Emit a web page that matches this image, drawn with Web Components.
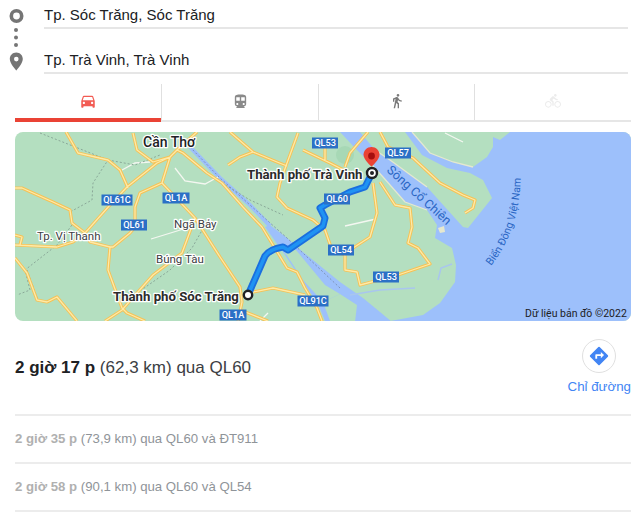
<!DOCTYPE html>
<html lang="vi">
<head>
<meta charset="utf-8">
<title>Chỉ đường</title>
<style>
  html, body { margin: 0; background: #fff; }
  body { width: 640px; height: 523px; overflow: hidden; font-family: "Liberation Sans", Arial, sans-serif; }
  directions-card { width: 616px; margin-left: 15px; }
</style>
</head>
<body>
<directions-card>
  <waypoint-list>
    <waypoint-field>Tp. Sóc Trăng, Sóc Trăng</waypoint-field>
    <waypoint-field>Tp. Trà Vinh, Trà Vinh</waypoint-field>
  </waypoint-list>
  <mode-tabs></mode-tabs>
  <route-map></route-map>
  <route-summary time="2 giờ 17 p">(62,3 km) qua QL60</route-summary>
  <alt-route time="2 giờ 35 p">(73,9 km) qua QL60 và ĐT911</alt-route>
  <alt-route time="2 giờ 58 p">(90,1 km) qua QL60 và QL54</alt-route>
</directions-card>

<script>
/**
 * Outer column of the card.
 */
customElements.define('directions-card',
  class extends HTMLElement {
    constructor () {
      super()
      this.attachShadow({ mode: 'open' }).innerHTML = `
        <style>
          :host { display: flex; flex-direction: column; }
        </style>
        <slot></slot>
      `
    }
  }
)

/**
 * From and to fields with the dotted marker column.
 */
customElements.define('waypoint-list',
  class extends HTMLElement {
    constructor () {
      super()
      this.attachShadow({ mode: 'open' }).innerHTML = `
        <style>
          :host { display: flex; height: 84px; margin-left: -15px; }
          svg { flex: none; width: 44px; height: 74px; }
          .fields { flex: none; width: 584px; display: flex; flex-direction: column; gap: 16px; }
        </style>
        <svg viewBox="0 0 44 74">
          <circle cx="16.500" cy="16" r="5.200" fill="none" stroke="#757575" stroke-width="3.600"/>
          <circle cx="16" cy="30" r="2" fill="#757575"/>
          <circle cx="16" cy="37.500" r="2" fill="#757575"/>
          <circle cx="16" cy="45" r="2" fill="#757575"/>
          <path fill="#757575" fill-rule="evenodd" d="M16.300 52.500c-3.700 0-6.500 2.900-6.500 6.500 0 4.700 6.500 11.500 6.500 11.500s6.500-6.800 6.500-11.500c0-3.600-2.800-6.500-6.500-6.500zm0 4.300a2.300 2.300 0 1 1 0 4.600 2.300 2.300 0 0 1 0-4.600z"/>
        </svg>
        <div class="fields"><slot></slot></div>
      `
    }
  }
)

customElements.define('waypoint-field',
  class extends HTMLElement {
    constructor () {
      super()
      this.attachShadow({ mode: 'open' }).innerHTML = `
        <style>
          :host {
            display: flex;
            align-items: center;
            height: 29px;
            padding-top: 2px;
            border-bottom: 2px solid #e6e6e6;
            box-sizing: border-box;
            font-size: 15px;
            color: #202124;
          }
        </style>
        <slot></slot>
      `
    }
  }
)

/**
 * Travel mode tabs. The car is the selected one.
 */
const MODE_ICONS = {
  car: 'M18.920 6.010C18.720 5.420 18.160 5 17.500 5h-11c-.66 0-1.210.42-1.420 1.010L3 12v8c0 .55.45 1 1 1h1c.55 0 1-.45 1-1v-1h12v1c0 .55.45 1 1 1h1c.55 0 1-.45 1-1v-8l-2.080-5.990zM6.500 16c-.83 0-1.500-.67-1.500-1.500S5.670 13 6.500 13s1.500.67 1.500 1.500S7.330 16 6.500 16zm11 0c-.83 0-1.500-.67-1.500-1.500s.67-1.500 1.500-1.500 1.500.67 1.500 1.500-.67 1.500-1.500 1.500zM5 11l1.500-4.500h11L19 11H5z',
  train: 'M12 2c-4.420 0-8 .5-8 4v9.500C4 17.430 5.570 19 7.500 19L6 20.500v.5h12v-.5L16.500 19c1.930 0 3.500-1.570 3.500-3.500V6c0-3.500-3.580-4-8-4zM7.500 17c-.83 0-1.500-.67-1.500-1.500S6.670 14 7.500 14s1.500.67 1.500 1.500S8.330 17 7.500 17zm3.500-6H6V6h5v5zm5.500 6c-.83 0-1.500-.67-1.500-1.500s.67-1.500 1.500-1.500 1.500.67 1.500 1.500-.67 1.500-1.500 1.500zm1.500-6h-5V6h5v5z',
  walk: 'M13.500 5.500c1.100 0 2-.9 2-2s-.9-2-2-2-2 .9-2 2 .9 2 2 2zM9.800 8.900L7 23h2.100l1.800-8 2.100 2v6h2v-7.500l-2.100-2 .6-3C14.800 12 16.800 13 19 13v-2c-1.900 0-3.500-1-4.300-2.400l-1-1.600c-.4-.6-1-1-1.700-1-.3 0-.5.1-.8.1L6 8.300V13h2V9.600l1.800-.7',
  bike: 'M15.500 5.500c1.100 0 2-.9 2-2s-.9-2-2-2-2 .9-2 2 .9 2 2 2zM5 12c-2.800 0-5 2.200-5 5s2.200 5 5 5 5-2.200 5-5-2.200-5-5-5zm0 8.500c-1.900 0-3.500-1.600-3.500-3.500s1.600-3.500 3.500-3.500 3.500 1.600 3.500 3.500-1.600 3.500-3.500 3.500zm5.800-10l2.400-2.400.8.8c1.300 1.300 3 2.100 5.100 2.100V9c-1.500 0-2.700-.6-3.600-1.500l-1.900-1.900c-.5-.4-1-.6-1.600-.6s-1.100.2-1.400.6L7.800 8.400c-.4.4-.6.9-.6 1.400 0 .6.2 1.100.6 1.400L11 14v5h2v-6.200l-2.200-2.300zM19 12c-2.800 0-5 2.200-5 5s2.200 5 5 5 5-2.200 5-5-2.200-5-5-5zm0 8.500c-1.900 0-3.500-1.600-3.500-3.500s1.600-3.500 3.500-3.500 3.500 1.600 3.500 3.500-1.600 3.500-3.500 3.500z'
}

customElements.define('mode-tabs',
  class extends HTMLElement {
    constructor () {
      super()
      const tab = (name, color, size, cls) => `
        <div class="tab ${cls}">
          <svg viewBox="0 0 24 24" width="${size}" height="${size}"><path fill="${color}" d="${MODE_ICONS[name]}"/></svg>
        </div>`
      this.attachShadow({ mode: 'open' }).innerHTML = `
        <style>
          :host {
            display: grid;
            grid-template-columns: 146px 157px 156px 1fr;
            height: 38px;
            border-bottom: 2px solid #e6e6e6;
            box-sizing: border-box;
          }
          .tab { display: flex; align-items: center; justify-content: center; border-left: 1px solid #e0e0e0; padding-bottom: 2px; }
          .tab.first { border-left: 0; position: relative; }
          .tab.first::after {
            content: "";
            position: absolute;
            left: 0; right: 0; bottom: -2px;
            height: 4px;
            background: #ea4335;
          }
        </style>
        ${tab('car', '#f25c54', 18, 'first')}
        ${tab('train', '#8a8a8a', 17, '')}
        ${tab('walk', '#7a7a7a', 16, '')}
        ${tab('bike', '#ececec', 16, '')}
      `
    }
  }
)

/**
 * The static map. Coordinates are page pixels, hence the offset viewBox.
 */
const ROADS = [
  'M66 132L78 153L108 160L120 170L128 188',
  'M15 188L22 188L53 202L70 210L72 223L85 233L110 205L127 187L157 163L170 157L177 150L197 132',
  'M170 157L162 183L180 202L195 218L182 253L153 275L137 293L122 310L105 321',
  'M162 183L140 193L135 207L135 227L130 233L113 247L110 247L90 242L85 233L73 242L57 247L15 245',
  'M110 247L108 270L122 308L127 313L145 321',
  'M15 235L22 237L20 245',
  'M15 258L27 273L37 300L47 302L57 297L77 321',
  'M195 218L220 257L240 287L242 302L238 321',
  'M240 310L268 321',
  'M253 292L273 288L305 295',
  'M133 133L137 150L153 162L170 157',
  'M177 150L183 153L207 173L222 183L243 207L262 227L287 268L297 272L305 288L317 308L322 321',
  'M230 132L253 152L277 162L287 166',
  'M228 165L240 157L253 152',
  'M298 133L287 163L280 183L277 197L287 208L313 220L325 230L332 250L345 255',
  'M332 248L353 248L370 237L377 213L373 183',
  'M380 182L395 205L410 208L412 227L408 243L418 248L430 264L398 275L360 285L357 272L345 270L345 255',
  'M303 150L330 163L357 177',
  'M325 143L325 160',
  'M368 132L350 153L345 167',
  'M380 132L388 147L413 158L440 183L463 195L475 200L473 208L465 213'
].join('')

const MINOR_ROADS = 'M122 170L135 163L150 162M175 168L185 181L205 184L218 177M151 239L190 227M345 226L376 219M445 133L463 142M260 321L268 313'
const BORDERS = 'M40 133L108 160L93 183L92 200L70 212L72 225L57 245L25 270L30 290L17 295M27 270L38 300M108 160L135 165L160 155M137 293L170 270L192 248L205 225M222 183L250 200L283 215'
const BANKS = 'M412 132L430 153L453 162L473 167M372 165L383 177L405 202L427 210M375 150L390 160L427 187'
const HAU_RIVER = 'M190 147L220 178L250 205L270 226'

const SHIELDS = [
  ['QL61C', 117, 200, 31], ['QL1A', 176, 198, 27], ['QL61', 134, 225, 26],
  ['QL60', 337, 199, 26], ['QL53', 325, 143, 26], ['QL57', 398, 153, 26],
  ['QL54', 341, 250, 26], ['QL53', 386, 277, 26], ['QL91C', 313, 301, 31],
  ['QL1A', 233, 315, 27]
]

const ROUTE = 'M248 295L265 256Q270 249 283 247L288 250L323 226L325 218L320 208L325 205L350 192L365 187L372 173'

customElements.define('route-map',
  class extends HTMLElement {
    constructor () {
      super()
      const shields = SHIELDS.map(([name, x, y, w]) => `
        <rect x="${x - w / 2}" y="${y - 5.500}" width="${w}" height="11" fill="#2b70c6"/>
        <text class="shield" x="${x}" y="${y + 3.200}">${name}</text>`).join('')
      this.attachShadow({ mode: 'open' }).innerHTML = `
        <style>
          :host { display: block; height: 189px; margin-top: 10px; border-radius: 8px; overflow: hidden; }
          svg { display: block; font-family: Roboto, "Liberation Sans", sans-serif; }
          .shield { font: 500 9.200px Roboto, "Liberation Sans", sans-serif; fill: #fff; text-anchor: middle; }
          .place { fill: #3c4043; stroke: #fff; stroke-width: 2.500px; paint-order: stroke; stroke-linejoin: round; font-size: 11.500px; }
          .city { font-weight: 700; font-size: 13.200px; fill: #2b2b2b; }
          .big { font-size: 14px; font-weight: 500; fill: #202124; }
          .water-label { fill: #2a66c4; font-size: 10.600px; }
          .water-label.river { font-size: 12.500px; }
        </style>
        <svg width="616" height="189" viewBox="15 132 616 189">
          <defs>
            <path id="curve" d="M491 266C508 244 521 215 521 170"/>
          </defs>
          <rect x="15" y="132" width="616" height="189" fill="#b4dfc0"/>
          <ellipse cx="345" cy="155" rx="9" ry="9" fill="#a7d8b5"/>
          <!-- sea and the two river mouths -->
          <path fill="#9dc0fb" d="M510 132L632 132L632 322L385 322L423 315L440 303L455 282L456 265L452 248L435 238L437 225L427 210L405 202L383 177L372 165L355 148L340 132L360 132L375 150L390 160L427 187L463 227L468 228L492 198L483 180L470 173L447 168L422 155L405 132L412 132L430 153L453 162L473 167L487 157L493 147L493 137L500 140Z"/>
          <path fill="#9dc0fb" d="M270 225L287 238L303 252L340 282L363 298L380 312L392 322L355 322L357 305L340 294L323 302L330 321L325 321L318 304L303 282L285 255L265 227Z"/>
          <path fill="#b4dfc0" d="M282 248L296 250L325 285L340 294L323 302L303 280Z"/>
          <path d="${HAU_RIVER}" fill="none" stroke="#9dc0fb" stroke-width="4"/>
          <path d="M190 147L220 178L250 205L287 238L340 288" fill="none" stroke="#7f94b8" stroke-width="1" stroke-dasharray="2 2"/>
          <path d="${BANKS}" fill="none" stroke="#e4e8cf" stroke-width="1.300"/>
          <path fill="#e6e8cf" d="M438 228L444 226L445 232L440 233Z"/>
          <path fill="none" stroke="#a9c6ee" stroke-width="1.500" d="M350 295L380 290L415 288M438 280L441 268L452 264"/>
          <path d="${MINOR_ROADS}" fill="none" stroke="#f4f7f1" stroke-width="1.300"/>
          <path d="${BORDERS}" fill="none" stroke="#8aa898" stroke-width="1" stroke-dasharray="2 2"/>
          <path d="${ROADS}" fill="none" stroke="#f6c255" stroke-width="3.200" stroke-linejoin="round"/>
          <path d="${ROADS}" fill="none" stroke="#fdeaa8" stroke-width="1.300" stroke-linejoin="round"/>
          <!-- route -->
          <path d="${ROUTE}" fill="none" stroke="#1a6fdf" stroke-width="7" stroke-linejoin="round"/>
          <path d="${ROUTE}" fill="none" stroke="#1f93f3" stroke-width="3.400" stroke-linejoin="round"/>
          ${shields}
          <text class="place big" x="143" y="147">Cần Thơ</text>
          <text class="place" x="37" y="240">Tp. Vị Thanh</text>
          <text class="place" x="174" y="228">Ngã Bảy</text>
          <text class="place" x="156" y="263">Búng Tàu</text>
          <text class="place city" x="113" y="300.500">Thành phố Sóc Trăng</text>
          <text class="place city" x="247" y="178.500">Thành phố Trà Vinh</text>
          <text class="water-label river" transform="translate(386 171) rotate(42)">Sông Cổ Chiên</text>
          <text class="water-label"><textPath href="#curve">Biển Đông Việt Nam</textPath></text>
          <text x="525" y="317" font-size="10.500" fill="#202124">Dữ liệu bản đồ ©2022</text>
          <circle cx="248" cy="295" r="4.200" fill="#fff" stroke="#202124" stroke-width="2.400"/>
          <path fill="#ea4335" d="M371.500 147c-4.500 0-8 3.500-8 7.800 0 5 8 11.800 8 11.800s8-6.800 8-11.800c0-4.300-3.500-7.800-8-7.800z"/>
          <circle cx="371.500" cy="156" r="3.400" fill="#a50e0e"/>
          <circle cx="372" cy="173" r="5" fill="#fff" stroke="#202124" stroke-width="2.400"/>
          <circle cx="372" cy="173" r="2" fill="#202124"/>
        </svg>
      `
    }
  }
)

/**
 * Fastest route with the directions button.
 */
customElements.define('route-summary',
  class extends HTMLElement {
    constructor () {
      super()
      this.attachShadow({ mode: 'open' }).innerHTML = `
        <style>
          :host {
            display: flex;
            justify-content: space-between;
            height: 93px;
            font-size: 17px;
            color: #3c4043;
          }
          .text { padding-top: 38px; line-height: 18px; }
          b { color: #202124; }
          a { display: flex; flex-direction: column; align-items: center; padding-top: 18px; color: #4285f4; font-size: 13.300px; text-decoration: none; }
          .round {
            display: flex; align-items: center; justify-content: center;
            width: 34px; height: 34px; margin-bottom: 6px;
            border: 1px solid #e0e0e0; border-radius: 50%; box-sizing: border-box;
          }
        </style>
        <div class="text"><b>${this.getAttribute('time')}</b> <slot></slot></div>
        <a href="#">
          <span class="round">
            <svg viewBox="0 0 24 24" width="22" height="22"><path fill="#4285f4" d="M21.710 11.290l-9-9a.996.996 0 0 0-1.410 0l-9 9a.996.996 0 0 0 0 1.410l9 9c.39.39 1.020.39 1.410 0l9-9a.996.996 0 0 0 0-1.410zM14 14.500V12h-4v3H8v-4c0-.55.45-1 1-1h5V7.500l3.500 3.500-3.500 3.500z"/></svg>
          </span>
          Chỉ đường
        </a>
      `
    }
  }
)

customElements.define('alt-route',
  class extends HTMLElement {
    constructor () {
      super()
      this.attachShadow({ mode: 'open' }).innerHTML = `
        <style>
          :host {
            display: flex;
            align-items: center;
            gap: 0.28em;
            height: 48px;
            padding-bottom: 2px;
            border-top: 2px solid #ececec;
            box-sizing: border-box;
            font-size: 13.200px;
            color: #8f9499;
          }
          :host(:last-of-type) { height: 50px; border-bottom: 2px solid #ececec; }
          b { color: #b0b0b0; }
        </style>
        <b>${this.getAttribute('time')}</b> <span><slot></slot></span>
      `
    }
  }
)
</script>
</body>
</html>
